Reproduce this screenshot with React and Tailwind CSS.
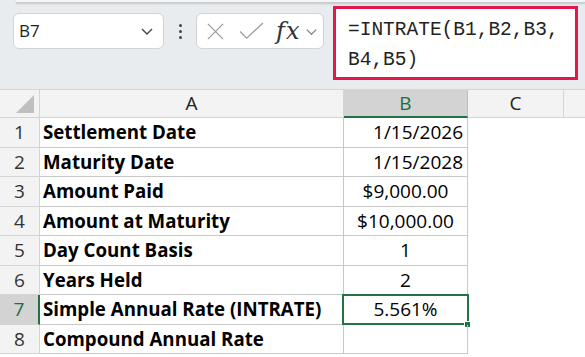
import React from 'react'

const ROWS = [
  { n: 1, label: 'Settlement Date', value: '1/15/2026', align: 'right', h: 'h-[30px]' },
  { n: 2, label: 'Maturity Date', value: '1/15/2028', align: 'right', h: 'h-[29px]' },
  { n: 3, label: 'Amount Paid', value: '$9,000.00', align: 'center', h: 'h-[30px]' },
  { n: 4, label: 'Amount at Maturity', value: '$10,000.00', align: 'center', h: 'h-[29px]' },
  { n: 5, label: 'Day Count Basis', value: '1', align: 'center', h: 'h-[30px]' },
  { n: 6, label: 'Years Held', value: '2', align: 'center', h: 'h-[29px]' },
  { n: 7, label: 'Simple Annual Rate (INTRATE)', value: '5.561%', align: 'center', h: 'h-[30px]', selected: true },
  { n: 8, label: 'Compound Annual Rate', value: '', align: 'center', h: 'h-[29px]' },
]

const cellFont = { fontFamily: '"Open Sans", "Noto Sans", sans-serif' }

function Chevron({ className }) {
  return (
    <svg viewBox="0 0 16 16" className={className} fill="none" stroke="currentColor" strokeWidth="1.4">
      <path d="M3 6l5 5 5-5" />
    </svg>
  )
}

function FormulaBar() {
  return (
    <div className="relative h-[90px] bg-[#e9ecef] border-b border-[#d6d6d6]">
      <div className="ml-[16px] h-[3px] bg-[#f4f5f6] border-b border-[#c9cccf] shadow-[0_1px_2px_rgba(0,0,0,0.15)]" />
      <div className="flex items-start pt-[10px] pl-[13px]">
        <div className="flex items-center justify-between w-[151px] h-[36px] bg-white border border-[#d3d3d3] rounded-[6px] pl-[5px] pr-[8px]">
          <span className="text-[17px] text-[#1f1f1f]" style={{ fontFamily: '"Open Sans", sans-serif' }}>B7</span>
          <Chevron className="w-[16px] h-[16px] text-[#444]" />
        </div>
        <div className="flex flex-col items-center gap-[3px] w-[32px] pt-[11px]">
          <span className="w-[3px] h-[3px] bg-[#444] rounded-full" />
          <span className="w-[3px] h-[3px] bg-[#444] rounded-full" />
          <span className="w-[3px] h-[3px] bg-[#444] rounded-full" />
        </div>
        <div className="flex items-center w-[128px] h-[36px] bg-white border border-[#d3d3d3] rounded-[6px] pl-[9px]">
          <svg viewBox="0 0 20 20" className="w-[19px] h-[19px] text-[#9a9a9a]" fill="none" stroke="currentColor" strokeWidth="1.3">
            <path d="M2 2l16 16M18 2L2 18" />
          </svg>
          <svg viewBox="0 0 26 20" className="ml-[14px] w-[25px] h-[19px] text-[#9a9a9a]" fill="none" stroke="currentColor" strokeWidth="1.3">
            <path d="M1 10l7 7L25 1" />
          </svg>
          <span className="ml-[12px] text-[24px] italic text-[#333] leading-none tracking-[1px]" style={{ fontFamily: '"DejaVu Serif", "Liberation Serif", serif' }}>fx</span>
          <Chevron className="ml-[4px] w-[15px] h-[15px] text-[#888]" />
        </div>
      </div>
      <div
        className="absolute left-[333px] top-[6px] w-[245px] h-[74px] bg-white border-[3px] border-[#e1194b] pl-[12px] pt-[6px] text-[19.5px] leading-[30px] text-[#222]"
        style={{ fontFamily: '"Liberation Mono", monospace' }}
      >
        <div>=INTRATE(B1,B2,B3,</div>
        <div>B4,B5)</div>
      </div>
    </div>
  )
}

function HeaderRow() {
  return (
    <div className="flex h-[28px] bg-[#f3f3f3] text-[19px] text-[#222]" style={cellFont}>
      <div className="relative w-[40px] border-r border-b border-[#d4d4d4]">
        <div className="absolute right-[5px] bottom-[4px] w-0 h-0 border-l-[18px] border-l-transparent border-b-[18px] border-b-[#bfbfbf]" />
      </div>
      <div className="w-[304px] flex items-center justify-center border-r border-b border-[#d4d4d4]">A</div>
      <div className="w-[124px] flex items-center justify-center bg-[#d3d3d3] text-[#1e6e41] border-r border-[#bdbdbd] border-b-[2px] border-b-[#217346]">B</div>
      <div className="w-[96px] flex items-center justify-center border-r border-b border-[#d4d4d4]">C</div>
      <div className="flex-1 border-b border-[#d4d4d4]" />
    </div>
  )
}

function DataRow({ row }) {
  const sel = row.selected
  return (
    <div className={`flex ${row.h} text-[19px] text-black`} style={cellFont}>
      <div
        className={`w-[40px] flex items-center justify-center border-b border-[#d4d4d4] ${
          sel ? 'bg-[#d3d3d3] text-[#1e6e41] border-r-[2px] border-r-[#217346]' : 'bg-[#f3f3f3] text-[#333] border-r border-r-[#d4d4d4]'
        }`}
      >
        {row.n}
      </div>
      <div className="w-[304px] flex items-center pl-[3px] font-bold text-[18.7px] border-r border-b border-[#c8c8c8] whitespace-nowrap">
        {row.label}
      </div>
      <div
        className={`relative w-[124px] flex items-center border-r border-b border-[#c8c8c8] ${
          row.align === 'right' ? 'justify-end pr-[4px]' : 'justify-center'
        }`}
      >
        {sel && (
          <>
            <div className="absolute left-[-2px] top-[-1px] right-[-2px] bottom-[-1px] border-[2px] border-[#217346]" />
            <div className="absolute right-[-4px] bottom-[-4px] w-[7px] h-[7px] bg-[#217346] border border-white" />
          </>
        )}
        {row.value}
      </div>
      <div className="flex-1 bg-white" />
    </div>
  )
}

export default function App() {
  return (
    <div className="w-[585px] h-[357px] overflow-hidden bg-white">
      <FormulaBar />
      <HeaderRow />
      {ROWS.map((r) => (
        <DataRow key={r.n} row={r} />
      ))}
    </div>
  )
}
